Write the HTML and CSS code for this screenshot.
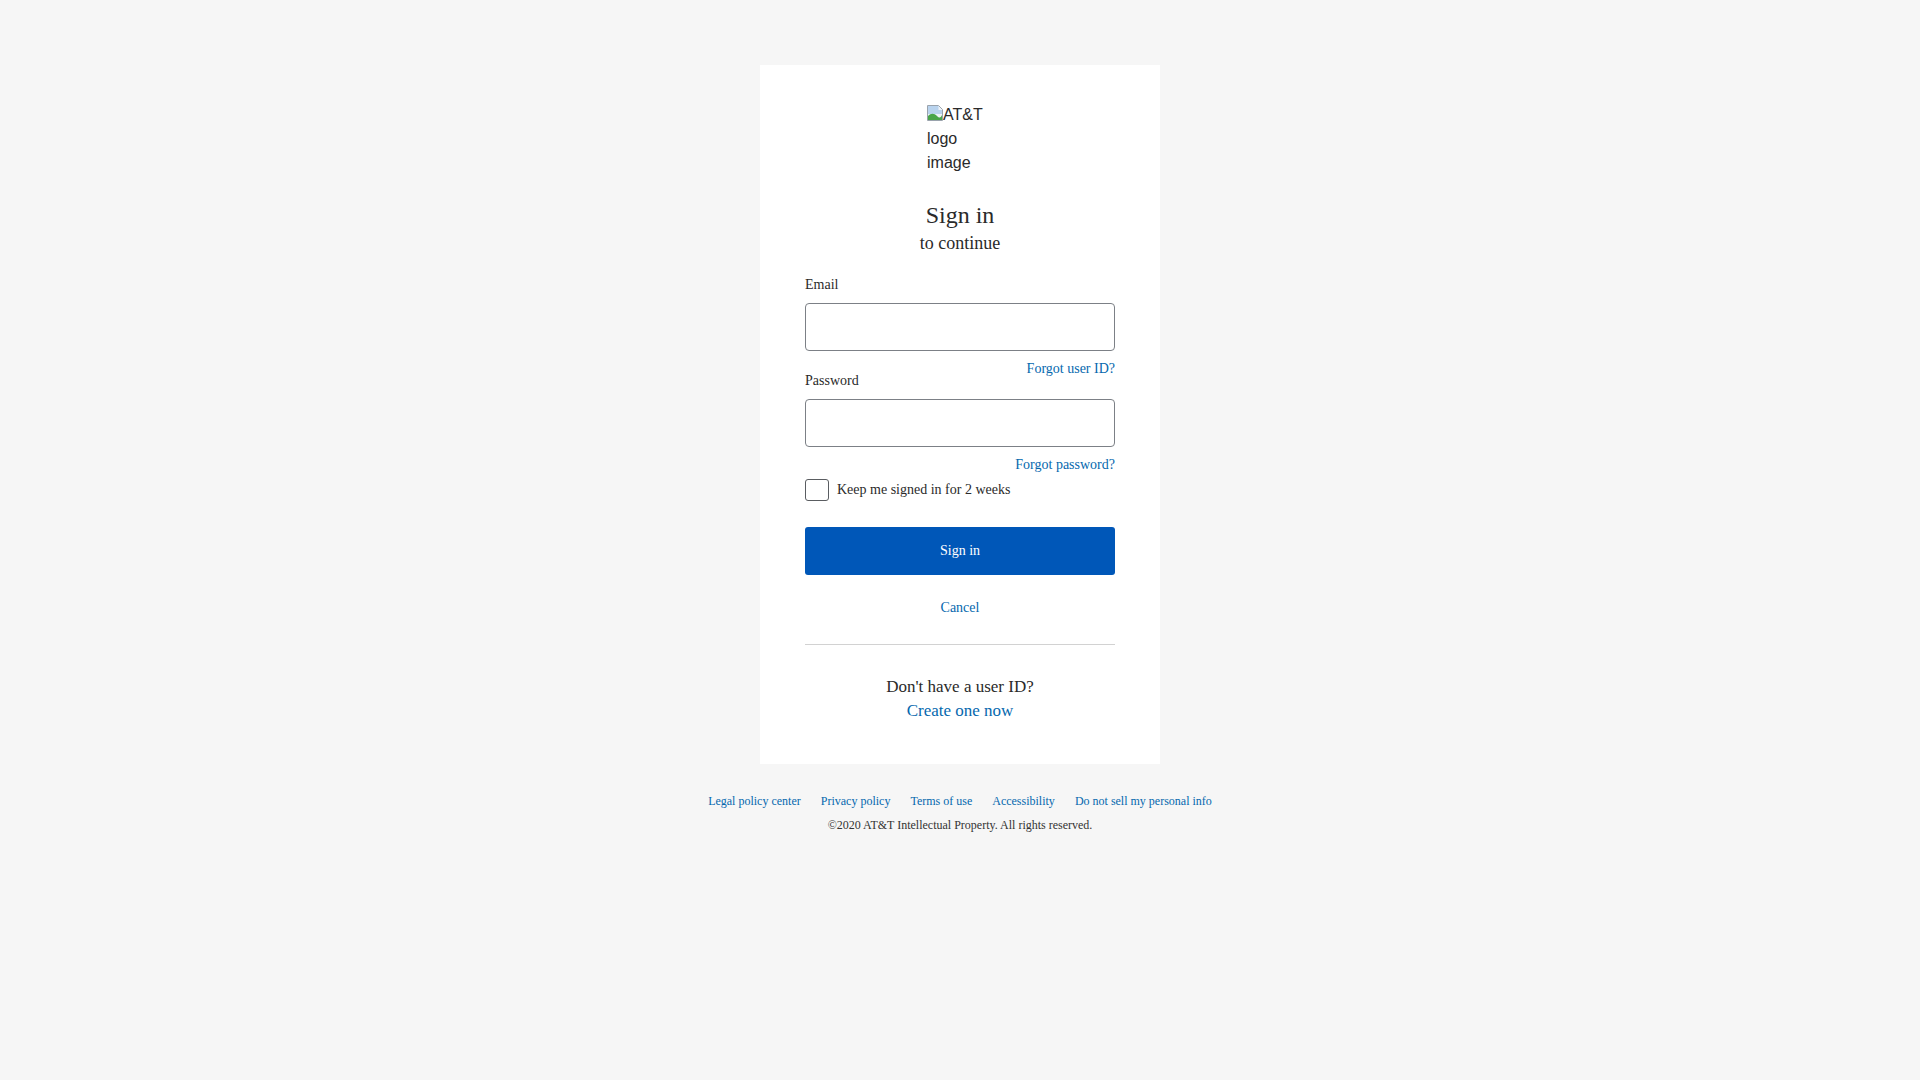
FILE: index.html
```html
<!DOCTYPE html>
<html lang="en">
<head>
<meta charset="UTF-8" />
<meta name="viewport" content="width=device-width, initial-scale=1" />
<title>Sign in</title>
<link rel="stylesheet" href="styles.css">
</head>
<body>

<main class="card">
  <div class="logo">
    <svg class="logo-broken" width="16" height="16" viewBox="0 0 16 16" aria-hidden="true">
      <path d="M0.5 0.5h11l4 4v11h-15z" fill="#eef3f8" stroke="#9aa3ad"/>
      <path d="M1 1h10.5v4h3.5v4H1z" fill="#b9d3ee"/>
      <path d="M1 15V11c3-3 6-3 9 0s4 1 5-1v5z" fill="#4aa54a"/>
    </svg>AT&amp;T logo image
  </div>

  <h1 class="title">Sign in</h1>
  <p class="subtitle">to continue</p>

  <form class="signin-form" onsubmit="return false">
    <label class="field-label" for="email">Email</label>
    <input class="text-input" id="email" type="text">
    <div class="forgot"><a href="#">Forgot user ID?</a></div>

    <label class="field-label after-forgot" for="password">Password</label>
    <input class="text-input" id="password" type="password">
    <div class="forgot"><a href="#">Forgot password?</a></div>

    <label class="remember">
      <span class="checkbox"></span>
      <span>Keep me signed in for 2 weeks</span>
    </label>

    <button class="btn-primary" type="submit">Sign in</button>
    <div class="cancel"><a href="#">Cancel</a></div>
  </form>

  <hr class="divider">

  <div class="register">
    <p>Don't have a user ID?</p>
    <a href="#">Create one now</a>
  </div>
</main>

<footer class="footer">
  <nav class="footer-links">
    <a href="#">Legal policy center</a>
    <a href="#">Privacy policy</a>
    <a href="#">Terms of use</a>
    <a href="#">Accessibility</a>
    <a href="#">Do not sell my personal info</a>
  </nav>
  <p class="copyright">©2020 AT&amp;T Intellectual Property. All rights reserved.</p>
</footer>

</body>
</html>
```

FILE: styles.css
```css
* {
  box-sizing: border-box;
}
body {
  margin: 0;
  background: #f6f6f6;
  font-family: "Liberation Serif", "Times New Roman", serif;
  color: #2a2a2a;
}
a {
  color: #0568ae;
  text-decoration: none;
}
.card {
  width: 400px;
  margin: 65px auto 0;
  padding: 38px 45px 41px;
  background: #fff;
}
.logo {
  width: 66px;
  margin: 0 auto;
  font-family: "Liberation Sans", Arial, sans-serif;
  font-size: 16px;
  line-height: 24px;
  color: #2a2a2a;
}
.logo-broken {
  vertical-align: -1px;
}
.title {
  margin: 26px 0 0;
  font-size: 24px;
  line-height: 28px;
  font-weight: normal;
  text-align: center;
}
.subtitle {
  margin: 3px 0 0;
  font-size: 18px;
  line-height: 22px;
  text-align: center;
}
.signin-form {
  margin-top: 21px;
  display: flex;
  flex-direction: column;
}
.field-label {
  font-size: 14px;
  line-height: 20px;
}
.field-label.after-forgot {
  margin-top: -5px;
}
.text-input {
  height: 48px;
  margin-top: 8px;
  border: 1px solid #7c8086;
  border-radius: 4px;
  padding: 0 12px;
  font-size: 16px;
  background: #fff;
  outline: none;
}
.forgot {
  margin-top: 11px;
  font-size: 14px;
  line-height: 14px;
  text-align: right;
}
.remember {
  display: flex;
  align-items: center;
  gap: 8px;
  margin-top: 7px;
  font-size: 14px;
  line-height: 20px;
}
.checkbox {
  width: 24px;
  height: 22px;
  border: 1px solid #5a5d61;
  border-radius: 3px;
  background: #fff;
}
.btn-primary {
  height: 48px;
  margin-top: 26px;
  border: none;
  border-radius: 3px;
  background: #0057b8;
  color: #fff;
  font-family: inherit;
  font-size: 14px;
  cursor: pointer;
}
.cancel {
  margin-top: 23px;
  font-size: 14px;
  line-height: 20px;
  text-align: center;
}
.divider {
  margin: 26px 0 0;
  border: none;
  border-top: 1px solid #d2d2d2;
}
.register {
  margin-top: 30px;
  font-size: 17px;
  line-height: 24px;
  text-align: center;
}
.register p {
  margin: 0;
}
.footer {
  margin-top: 29px;
  text-align: center;
  font-size: 12px;
  line-height: 16px;
}
.footer-links {
  display: flex;
  justify-content: center;
  gap: 20px;
}
.copyright {
  margin: 8px 0 0;
  color: #333;
}
```
